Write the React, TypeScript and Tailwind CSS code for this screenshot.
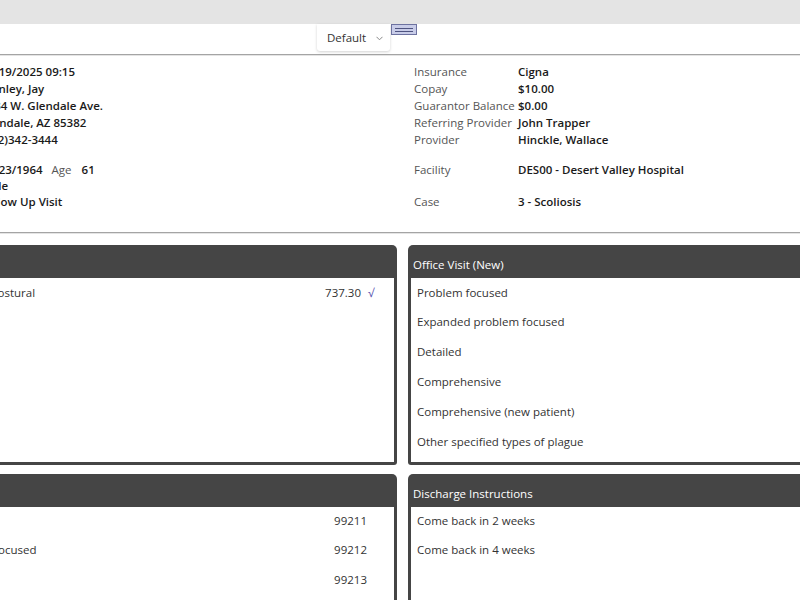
import React from "react";

const topRows: [string, string][] = [
  ["Insurance", "Cigna"],
  ["Copay", "$10.00"],
  ["Guarantor Balance", "$0.00"],
  ["Referring Provider", "John Trapper"],
  ["Provider", "Hinckle, Wallace"],
];

const lowerRows: [string, string][] = [
  ["Facility", "DES00 - Desert Valley Hospital"],
  ["", ""],
  ["Case", "3 - Scoliosis"],
];

const patientLines = ["02/19/2025 09:15", "Stanley, Jay", "1234 W. Glendale Ave.", "Glendale, AZ 85382", "(602)342-3444"];

const newVisit = [
  "Problem focused",
  "Expanded problem focused",
  "Detailed",
  "Comprehensive",
  "Comprehensive (new patient)",
  "Other specified types of plague",
];

const established: [string, string][] = [
  ["Problem focused", "99211"],
  ["Expanded problem focused", "99212"],
  ["Detailed", "99213"],
];

const discharge = ["Come back in 2 weeks", "Come back in 4 weeks"];

function Panel({ title, children, className }: { title: string; children: React.ReactNode; className?: string }) {
  return (
    <div className={"flex shrink-0 flex-col rounded-t-[5px] rounded-b-[3px] bg-[#454545] " + (className ?? "")}>
      <div className="h-[33px] pl-[5px] pt-[12px] leading-[16px] text-white">{title}</div>
      <div className="mx-[3px] mb-[3px] flex-1 bg-white">{children}</div>
    </div>
  );
}

function Rule() {
  return (
    <div>
      <div className="h-px bg-[#a4a4a4]" />
      <div className="h-px bg-[#e4e4e4]" />
    </div>
  );
}

export default function App() {
  return (
    <div className="h-[600px] w-[800px] overflow-hidden bg-white font-['Open_Sans',sans-serif] text-[11.5px] text-[#222]">
      <div className="h-[24px] bg-[#e4e4e4]" />

      <div className="flex h-[30px] items-start pl-[317px]">
        <div className="flex h-[27px] w-[73px] items-center rounded-b-[3px] bg-white pl-[10px] pt-px text-[#333] shadow-[0_1px_3px_rgba(0,0,0,0.18)]">
          Default
          <svg className="ml-[10px]" width="7" height="5" viewBox="0 0 7 5">
            <path d="M0.5 0.8 L3.5 3.8 L6.5 0.8" fill="none" stroke="#888" strokeWidth="1" />
          </svg>
        </div>
        <div className="ml-px flex h-[11px] w-[26px] flex-col justify-center gap-[2px] border border-[#6d72a0] bg-[#c8cce8] px-[3px]">
          <div className="h-px bg-[#4e5380]" />
          <div className="h-px bg-[#4e5380]" />
        </div>
      </div>
      <Rule />

      <div className="flex pb-[22px] pt-[7px]">
        <div className="ml-[-19px] w-[433px] shrink-0 font-semibold text-[#1a1a1a]">
          {patientLines.map((l) => (
            <div key={l} className="h-[17px] leading-[17px]">
              {l}
            </div>
          ))}
          <div className="mt-[14px] h-[16px] leading-[16px]">
            01/23/1964
            <span className="ml-[9px] font-normal text-[#555]">Age</span>
            <span className="ml-[10px]">61</span>
          </div>
          <div className="h-[16px] leading-[16px]">Male</div>
          <div className="h-[16px] leading-[16px]">Follow Up Visit</div>
        </div>
        <div className="flex-1">
          <div className="grid grid-cols-[104px_1fr]">
            {topRows.map(([k, v]) => (
              <React.Fragment key={k}>
                <div className="h-[17px] leading-[17px] text-[#555]">{k}</div>
                <div className="h-[17px] font-semibold leading-[17px] text-[#1a1a1a]">{v}</div>
              </React.Fragment>
            ))}
          </div>
          <div className="mt-[14px] grid grid-cols-[104px_1fr]">
            {lowerRows.map(([k, v], i) => (
              <React.Fragment key={i}>
                <div className="h-[16px] leading-[16px] text-[#555]">{k}</div>
                <div className="h-[16px] font-semibold leading-[16px] text-[#1a1a1a]">{v}</div>
              </React.Fragment>
            ))}
          </div>
        </div>
      </div>
      <Rule />

      <div className="ml-[-120px] mt-[11px] flex flex-col gap-[9px]">
        <div className="flex gap-[11px]">
          <Panel title="Diagnosis" className="h-[220px] w-[517px]">
            <div className="flex h-[29px] items-center pl-px text-[#333]">
              <span className="flex-1">Idiopathic scoliosis, postural</span>
              <span>737.30</span>
              <span className="w-[33px] pl-[7px] text-[#5a55b0]">√</span>
            </div>
          </Panel>
          <Panel title="Office Visit (New)" className="h-[220px] w-[511px]">
            {newVisit.map((t) => (
              <div key={t} className="flex h-[30px] items-center pl-[6px] text-[#333] first:h-[29px]">
                {t}
              </div>
            ))}
          </Panel>
        </div>
        <div className="flex gap-[11px]">
          <Panel title="Established" className="h-[160px] w-[517px]">
            {established.map(([t, c]) => (
              <div key={c} className="flex h-[30px] items-center pl-[6px] pr-[27px] text-[#333] first:h-[28px]">
                <span className="flex-1">{t}</span>
                <span>{c}</span>
              </div>
            ))}
          </Panel>
          <Panel title="Discharge Instructions" className="h-[160px] w-[511px]">
            {discharge.map((t) => (
              <div key={t} className="flex h-[30px] items-center pl-[6px] text-[#333] first:h-[28px]">
                {t}
              </div>
            ))}
          </Panel>
        </div>
      </div>
    </div>
  );
}
